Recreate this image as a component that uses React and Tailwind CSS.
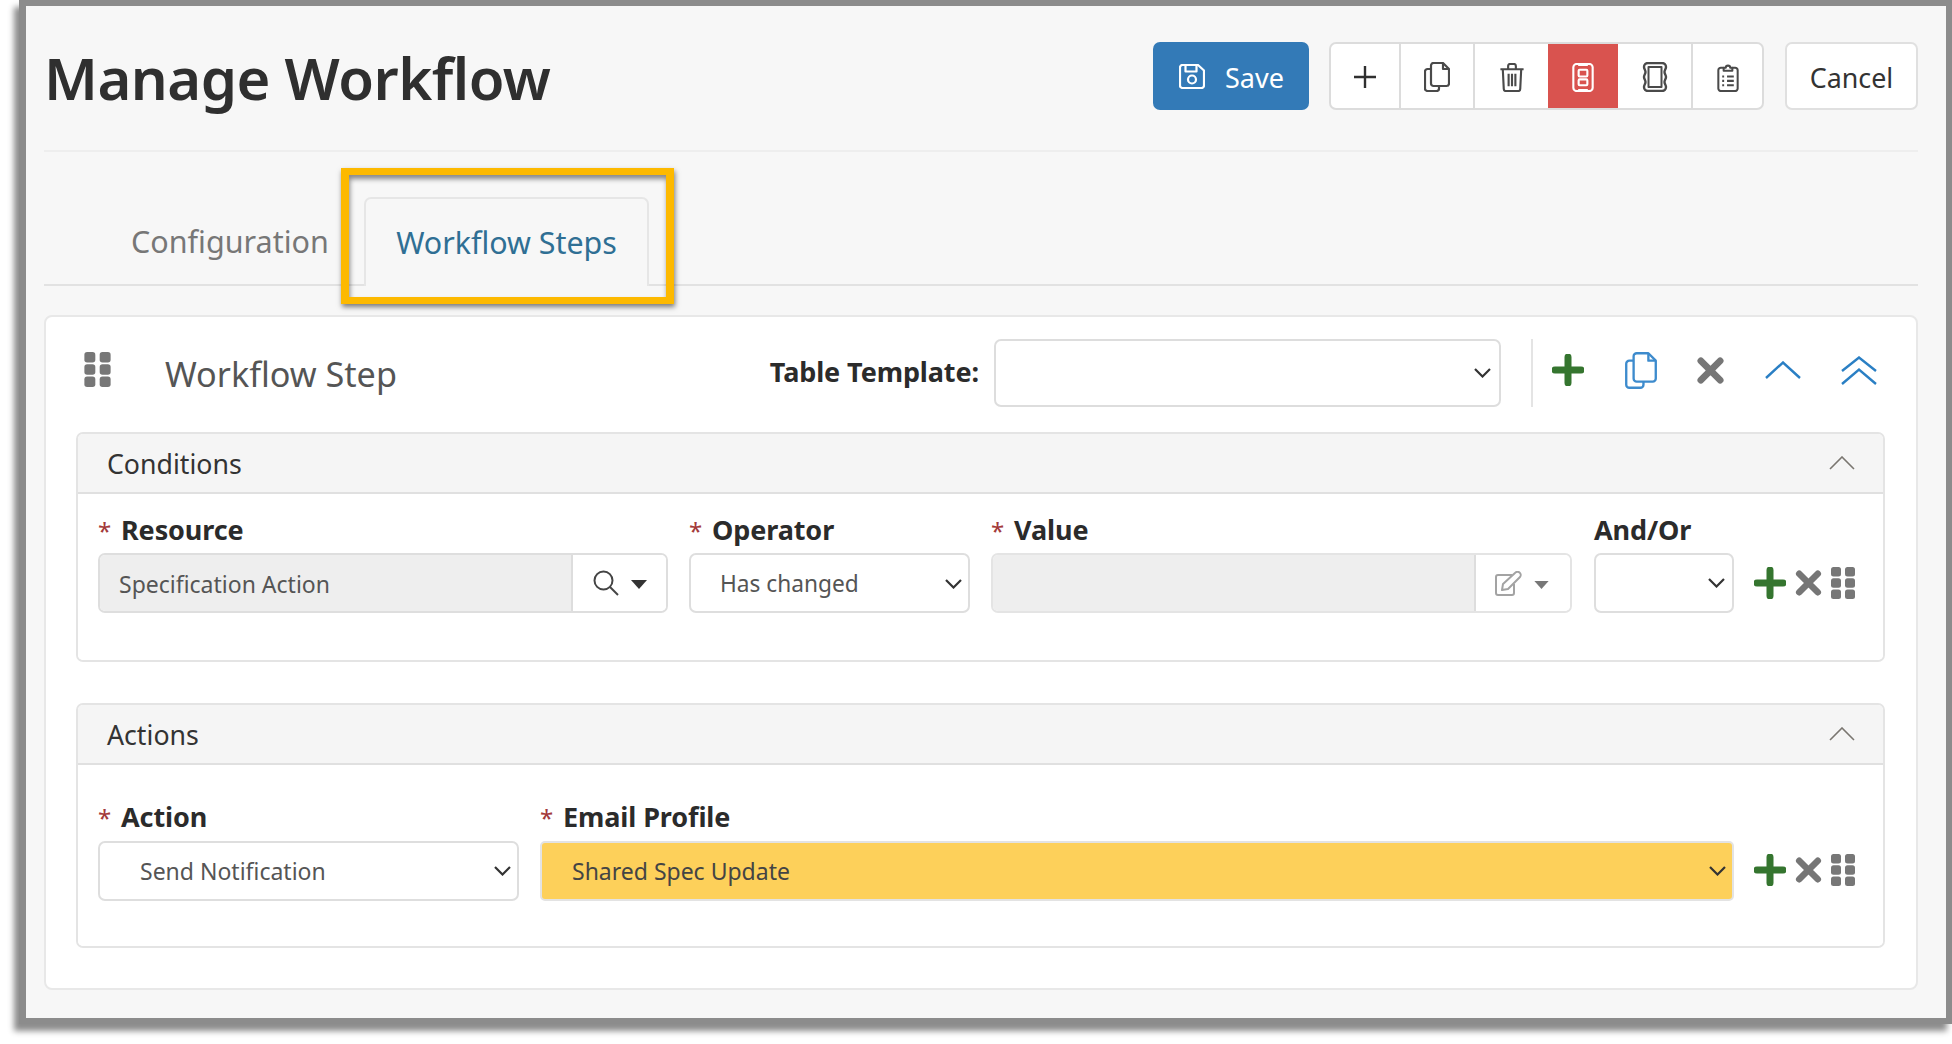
import React from "react";

const CopyIcon = ({ className, color = "#4a4a4a", sw = 2.2 }) => (
  <svg viewBox="0 0 26 30" className={className} fill="none" stroke={color} strokeWidth={sw} strokeLinejoin="round">
    <path d="M7 7H3.5A2.5 2.5 0 0 0 1 9.5v17A2.5 2.5 0 0 0 3.5 29h9a2.5 2.5 0 0 0 2.5-2.5V24" />
    <path d="M9.5 1H19l6 6v14.5a2.5 2.5 0 0 1-2.5 2.5h-13A2.5 2.5 0 0 1 7 21.5v-18A2.5 2.5 0 0 1 9.5 1Z" />
    <path d="M19 1v6h6" />
  </svg>
);

const GreenPlus = ({ className }) => (
  <svg viewBox="0 0 32 32" className={className}>
    <path d="M16 3v26M3 16h26" stroke="#35752f" strokeWidth="7" strokeLinecap="round" />
  </svg>
);

const GrayX = ({ className }) => (
  <svg viewBox="0 0 28 28" className={className}>
    <path d="M4 4l20 20M24 4L4 24" stroke="#767676" strokeWidth="7" strokeLinecap="round" />
  </svg>
);

const Grip = ({ className }) => (
  <svg viewBox="0 0 24 32" className={className} fill="#777777">
    <rect x="0" y="0" width="10" height="9.5" rx="2.5" />
    <rect x="14" y="0" width="10" height="9.5" rx="2.5" />
    <rect x="0" y="11.25" width="10" height="9.5" rx="2.5" />
    <rect x="14" y="11.25" width="10" height="9.5" rx="2.5" />
    <rect x="0" y="22.5" width="10" height="9.5" rx="2.5" />
    <rect x="14" y="22.5" width="10" height="9.5" rx="2.5" />
  </svg>
);

const Chevron = ({ className = "w-[17px] h-[10px]", color = "#333333" }) => (
  <svg viewBox="0 0 17 10" className={className} fill="none" stroke={color} strokeWidth="2.2">
    <path d="M1 1l7.5 7.5L16 1" />
  </svg>
);

const Caret = ({ className, color }) => (
  <svg viewBox="0 0 16 9" className={className} fill={color}>
    <path d="M0 0h16L8 9Z" />
  </svg>
);

const PanelChevron = () => (
  <svg viewBox="0 0 26 14" className="w-[26px] h-[14px]" fill="none" stroke="#7a7670" strokeWidth="1.6">
    <path d="M1 13L13 1l12 12" />
  </svg>
);

const Label = ({ required, children, gap = "mb-[7px]" }) => (
  <div className={`flex items-center h-[30px] ${gap} text-[27px] font-bold tracking-[-0.1px] text-[#2b2b2b] leading-[30px]`}>
    {required && <span className="w-[23px] text-[#a33a3a] font-normal text-[24px]">*</span>}
    <span className="-mt-[2px]">{children}</span>
  </div>
);

const RowIcons = () => (
  <div className="flex items-center gap-[9px] h-[60px] pl-[20px]">
    <GreenPlus className="w-[32px] h-[32px]" />
    <GrayX className="w-[27px] h-[26px]" />
    <Grip className="w-[24px] h-[32px]" />
  </div>
);

const Panel = ({ title, bodyClass, children }) => (
  <section className="border-2 border-[#e4e4e4] rounded-[7px] overflow-hidden">
    <header className="flex items-center justify-between h-[60px] bg-[#f5f5f5] border-b-2 border-[#e0e0e0] pl-[29px] pr-[28px]">
      <span className="text-[26.7px] text-[#333333] mt-[2px]">{title}</span>
      <PanelChevron />
    </header>
    <div className={`bg-white pl-[20px] ${bodyClass}`}>{children}</div>
  </section>
);

const ToolBtn = ({ className = "", children }) => (
  <div className={`flex items-center justify-center h-full pt-[2px] ${className}`}>{children}</div>
);

export default function App() {
  return (
    <div className="w-[1952px] h-[1044px] bg-white overflow-hidden pl-[19px] font-['Noto_Sans',sans-serif]">
      <div className="h-[1024px] border-[#8c8c8c] border-t-[6px] border-l-[7px] border-r-[6px] border-b-[6px] bg-[#f7f7f7] shadow-[-5px_7px_6px_rgba(0,0,0,0.45)] pl-[18px] pr-[28px]">
        {/* page header */}
        <div className="flex items-start justify-between h-[146px] border-b-2 border-[#eeeeee] pt-[36px]">
          <h1 className="text-[58px] leading-[68px] font-semibold tracking-[-0.5px] text-[#2f2f2f] mt-[2px]">Manage Workflow</h1>
          <div className="flex h-[68px]">
            <div className="flex items-center w-[156px] h-full rounded-[7px] bg-[#337ab7] pl-[26px] gap-[20px] text-white text-[27px]">
              <svg viewBox="0 0 26 25" className="w-[26px] h-[25px]" fill="none" stroke="#ffffff" strokeWidth="2.2" strokeLinejoin="round">
                <path d="M3.5 1H19l6 5.5V21.5a2.5 2.5 0 0 1-2.5 2.5h-19A2.5 2.5 0 0 1 1 21.5v-18A2.5 2.5 0 0 1 3.5 1Z" />
                <path d="M6.5 1v6.5h11V1" />
                <circle cx="13" cy="15.5" r="4" />
              </svg>
              <span className="mt-[5px]">Save</span>
            </div>
            <div className="flex h-full w-[435px] ml-[20px] rounded-[7px] bg-white border-2 border-[#dcdcdc] overflow-hidden">
              <ToolBtn className="w-[70px] border-r-2 border-[#dcdcdc]">
                <svg viewBox="0 0 22 22" className="w-[22px] h-[22px]" stroke="#2f2f2f" strokeWidth="2.4">
                  <path d="M11 0v22M0 11h22" />
                </svg>
              </ToolBtn>
              <ToolBtn className="w-[74px] border-r-2 border-[#dcdcdc]">
                <CopyIcon className="w-[26px] h-[30px]" />
              </ToolBtn>
              <ToolBtn className="w-[73px]">
                <svg viewBox="0 0 26 30" className="w-[26px] h-[29px]" fill="none" stroke="#4a4a4a" strokeWidth="2.2" strokeLinejoin="round">
                  <path d="M1 6.5h24M9 6V3a2 2 0 0 1 2-2h4a2 2 0 0 1 2 2v3" />
                  <path d="M3.5 7l1 20a2 2 0 0 0 2 2h13a2 2 0 0 0 2-2l1-20" />
                  <path d="M9.5 11v13M13 11v13M16.5 11v13" />
                </svg>
              </ToolBtn>
              <ToolBtn className="w-[70px] bg-[#d9534f]">
                <svg viewBox="0 0 22 30" className="w-[22px] h-[29px]" fill="none" stroke="#ffffff" strokeWidth="2.2" strokeLinejoin="round">
                  <rect x="1" y="1" width="20" height="28" rx="3.5" />
                  <rect x="6.5" y="7" width="9" height="7" rx="1" />
                  <rect x="6.5" y="17" width="9" height="6" rx="1" />
                  <path d="M6 1.5h10M6 28.5h10" strokeWidth="3" />
                </svg>
              </ToolBtn>
              <ToolBtn className="w-[75px] border-r-2 border-[#dcdcdc]">
                <svg viewBox="0 0 26 30" className="w-[26px] h-[30px]" fill="none" stroke="#4a4a4a" strokeWidth="2.4" strokeLinejoin="round">
                  <path d="M6 1h14a4 4 0 0 1 4 4c0 2-1.5 3-1.5 5s1.5 3 1.5 5-1.5 3-1.5 5 1.5 3 1.5 5a4 4 0 0 1-4 4H6a4 4 0 0 1-4-4c0-2 1.5-3 1.5-5S2 17 2 15s1.5-3 1.5-5S2 7 2 5a4 4 0 0 1 4-4Z" />
                  <rect x="6.5" y="5" width="13" height="20" strokeWidth="2" />
                </svg>
              </ToolBtn>
              <ToolBtn className="flex-1">
                <svg viewBox="0 0 22 30" className="w-[22px] h-[29px]" fill="none" stroke="#4a4a4a" strokeWidth="2.1" strokeLinejoin="round">
                  <path d="M6.5 5H3.5A2.5 2.5 0 0 0 1 7.5v19A2.5 2.5 0 0 0 3.5 29h15a2.5 2.5 0 0 0 2.5-2.5v-19A2.5 2.5 0 0 0 18.5 5h-3" />
                  <path d="M6.5 8V5h2.2a2.3 2.3 0 0 1 4.6 0h2.2v3Z" />
                  <path d="M5 14h2M10 14h7M5 18.5h2M10 18.5h7M5 23h2M10 23h7" />
                </svg>
              </ToolBtn>
            </div>
            <div className="flex items-center justify-center w-[133px] ml-[21px] h-full rounded-[7px] bg-white border-2 border-[#e0e0e0] text-[26.8px] text-[#333333]">
              <span className="mt-[4px]">Cancel</span>
            </div>
          </div>
        </div>

        {/* tabs */}
        <div className="relative flex items-end h-[134px] border-b-2 border-[#e2e2e2] pl-[56px]">
          <div className="flex items-center h-[87px] w-[264px] pl-[31px] pt-[3px] text-[30.5px] text-[#777777]">Configuration</div>
          <div className="flex items-center h-[89px] -mb-[2px] w-[285px] justify-center bg-[#f7f7f7] border-2 border-b-0 border-[#e6e6e6] rounded-t-[7px] text-[30.4px] text-[#2f6f94]">Workflow Steps</div>
          <div className="absolute left-[297px] top-[16px] w-[333px] h-[136px] border-x-[8px] border-y-[7px] border-[#fdb900] shadow-[1px_3px_5px_rgba(0,0,0,0.5),inset_1px_4px_5px_rgba(0,0,0,0.45)]" />
        </div>

        {/* card */}
        <div className="mt-[29px] h-[675px] rounded-[8px] border-2 border-[#e8e8e8] bg-white pl-[30px] pr-[31px] pt-[22px]">
          <div className="flex items-center h-[68px]">
            <Grip className="ml-[8px] w-[27px] h-[35px] -mt-[8px]" />
            <span className="ml-[54px] mt-[2px] text-[34.2px] text-[#555555]">Workflow Step</span>
            <span className="ml-auto text-[27px] font-bold tracking-[-0.1px] text-[#2b2b2b] -mt-[2px]">Table Template:</span>
            <div className="ml-[15px] flex items-center justify-end w-[507px] h-[68px] rounded-[7px] border-2 border-[#dddddd] bg-white pr-[8px]">
              <Chevron />
            </div>
            <div className="ml-[30px] w-[2px] h-[68px] bg-[#e4e4e4]" />
            <div className="flex items-center w-[352px] h-[68px] -mt-[6px]">
              <GreenPlus className="ml-[19px] w-[32px] h-[32px]" />
              <CopyIcon className="ml-[41px] w-[32px] h-[37px]" color="#3d8bcd" sw="1.9" />
              <GrayX className="ml-[39px] w-[29px] h-[27px]" />
              <svg viewBox="0 0 36 18" className="ml-[40px] w-[36px] h-[18px]" fill="none" stroke="#2a7fc4" strokeWidth="2.4">
                <path d="M1 17L18 1.5 35 17" />
              </svg>
              <svg viewBox="0 0 36 29" className="ml-[40px] w-[36px] h-[29px]" fill="none" stroke="#2a7fc4" strokeWidth="2.4">
                <path d="M1 15L18 1.5 35 15M1 28L18 13.5 35 28" />
              </svg>
            </div>
          </div>

          <div className="mt-[25px]">
            <Panel title="Conditions" bodyClass="h-[166px] pt-[22px]">
              <div className="flex">
                <div className="w-[570px]">
                  <Label required>Resource</Label>
                  <div className="flex h-[60px] rounded-[7px] border-2 border-[#dedede] overflow-hidden">
                    <div className="flex items-center w-[473px] bg-[#eeeeee] border-r-2 border-[#dddddd] pl-[19px] pt-[2px] text-[23px] text-[#555555]">Specification Action</div>
                    <div className="flex items-center pl-[20px] gap-[12px] bg-white flex-1">
                      <svg viewBox="0 0 26 26" className="w-[26px] h-[26px]" fill="none" stroke="#444444" strokeWidth="2">
                        <circle cx="10.5" cy="10.5" r="9" />
                        <path d="M17 17l8 8" />
                      </svg>
                      <Caret className="w-[16px] h-[9px] mt-[3px]" color="#333333" />
                    </div>
                  </div>
                </div>
                <div className="ml-[21px] w-[281px]">
                  <Label required>Operator</Label>
                  <div className="flex items-center justify-between h-[60px] rounded-[7px] border-2 border-[#dedede] bg-white pl-[29px] pr-[6px] pt-[2px] text-[22.7px] text-[#555555]">
                    <span>Has changed</span>
                    <Chevron />
                  </div>
                </div>
                <div className="ml-[21px] w-[581px]">
                  <Label required>Value</Label>
                  <div className="flex h-[60px] rounded-[7px] border-2 border-[#e4e4e4] overflow-hidden">
                    <div className="w-[483px] bg-[#eeeeee] border-r-2 border-[#dddddd]" />
                    <div className="flex items-center pl-[18px] gap-[12px] bg-white flex-1">
                      <svg viewBox="0 0 28 25" className="w-[28px] h-[25px]" fill="none" stroke="#a3a3a3" strokeWidth="2" strokeLinejoin="round">
                        <path d="M18 4H4a2 2 0 0 0-2 2v16a2 2 0 0 0 2 2h14a2 2 0 0 0 2-2v-9" />
                        <path d="M8 19l1-6L21 2a2 2 0 0 1 5 4L14 18Z" />
                      </svg>
                      <Caret className="w-[15px] h-[8px] mt-[4px]" color="#777777" />
                    </div>
                  </div>
                </div>
                <div className="ml-[22px] w-[140px]">
                  <Label>And/Or</Label>
                  <div className="flex items-center justify-end h-[60px] rounded-[7px] border-2 border-[#dedede] bg-white pr-[7px]">
                    <Chevron />
                  </div>
                </div>
                <div className="mt-[37px]">
                  <RowIcons />
                </div>
              </div>
            </Panel>
          </div>

          <div className="mt-[41px]">
            <Panel title="Actions" bodyClass="h-[181px] pt-[38px]">
              <div className="flex">
                <div className="w-[421px]">
                  <Label required gap="mb-[8px]">Action</Label>
                  <div className="flex items-center justify-between h-[60px] rounded-[7px] border-2 border-[#dedede] bg-white pl-[40px] pr-[6px] text-[23px] text-[#555555]">
                    <span>Send Notification</span>
                    <Chevron />
                  </div>
                </div>
                <div className="ml-[21px] w-[1194px]">
                  <Label required gap="mb-[8px]">Email Profile</Label>
                  <div className="flex items-center justify-between h-[60px] rounded-[5px] border-2 border-[#e3e3e3] bg-[#fdd05a] pl-[30px] pr-[6px] text-[23px] text-[#444444]">
                    <span>Shared Spec Update</span>
                    <Chevron />
                  </div>
                </div>
                <div className="mt-[37px]">
                  <RowIcons />
                </div>
              </div>
            </Panel>
          </div>
        </div>
      </div>
    </div>
  );
}
